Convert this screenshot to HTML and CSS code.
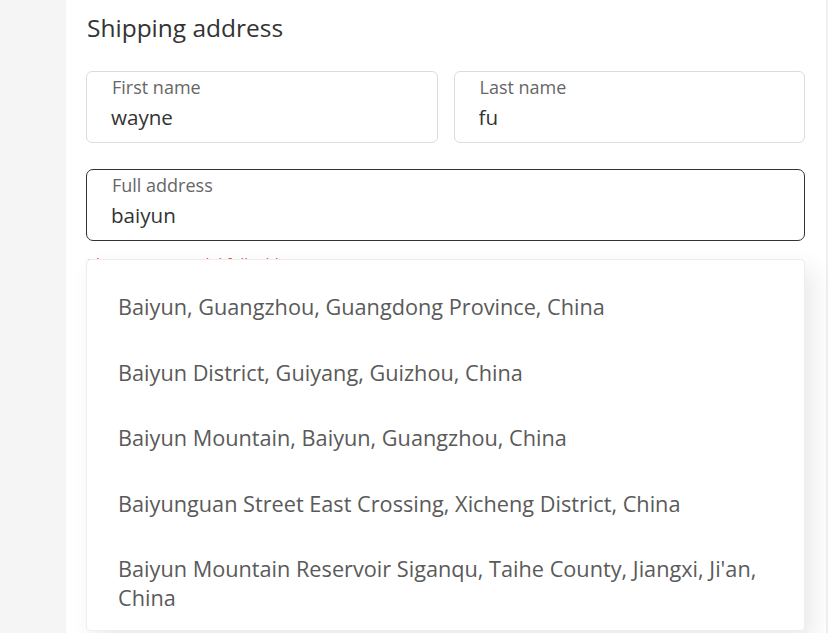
FILE: index.html
```html
<!DOCTYPE html>
<html lang="en">
<head>
    <meta charset="UTF-8">
    <meta name="viewport" content="width=device-width, initial-scale=1.0">
    <title>Shipping address</title>
    <link rel="stylesheet" href="styles.css">
</head>
<body>
    <div class="page">
        <div class="side"></div>
        <div class="panel">
            <h2 class="title">Shipping address</h2>

            <div class="row">
                <div class="field">
                    <label for="firstName">First name</label>
                    <input type="text" id="firstName" value="wayne">
                </div>
                <div class="field">
                    <label for="lastName">Last name</label>
                    <input type="text" id="lastName" value="fu">
                </div>
            </div>

            <div class="address">
                <div class="field focused">
                    <label for="fullAddress">Full address</label>
                    <input type="text" id="fullAddress" value="baiyun">
                </div>
                <div class="error">Please enter a valid full address</div>

                <ul class="suggestions">
                    <li>Baiyun, Guangzhou, Guangdong Province, China</li>
                    <li>Baiyun District, Guiyang, Guizhou, China</li>
                    <li>Baiyun Mountain, Baiyun, Guangzhou, China</li>
                    <li>Baiyunguan Street East Crossing, Xicheng District, China</li>
                    <li>Baiyun Mountain Reservoir Siganqu, Taihe County, Jiangxi, Ji'an, China</li>
                </ul>
            </div>
        </div>
        <div class="edge"></div>
    </div>
</body>
</html>
```

FILE: styles.css
```css
/* Basic styling */
body {
    margin: 0;
    background-color: #f5f5f5;
    font-family: "Open Sans", "Noto Sans", Arial, sans-serif;
    color: #333;
    overflow: hidden;
}

.page {
    display: flex;
    height: 633px;
}

.side {
    width: 66px;
    flex-shrink: 0;
}

.panel {
    flex: 1;
    background: white;
    padding: 10px 21px 0 20px;
}

.edge {
    width: 2px;
    background: #f0f0f0;
}

.title {
    margin: 0 0 25px 1px;
    font-size: 24.5px;
    font-weight: 400;
    line-height: 36px;
    color: #333;
}

.row {
    display: flex;
    gap: 16px;
    margin-bottom: 26px;
}

.field {
    flex: 1;
    height: 72px;
    box-sizing: border-box;
    border: 1px solid #dcdcdc;
    border-radius: 6px;
    padding: 4px 24px 0 24px;
    display: flex;
    flex-direction: column;
}

.field.focused {
    border-color: #333;
    border-radius: 7px;
}

.field label {
    font-size: 18px;
    line-height: 22px;
    color: #666;
    padding-left: 1px;
}

.field input {
    border: none;
    outline: none;
    padding: 0;
    margin-top: 5px;
    font-family: inherit;
    font-size: 20.6px;
    line-height: 28px;
    color: #333;
    background: transparent;
}

.address {
    position: relative;
}

.error {
    margin-top: 12px;
    font-size: 15px;
    color: #ff3b3b;
    padding-left: 1px;
}

.suggestions {
    position: absolute;
    top: 90px;
    left: 0;
    right: 0;
    margin: 0;
    padding: 14px 0 0;
    height: 372px;
    box-sizing: border-box;
    list-style: none;
    background: white;
    border: 1px solid #eee;
    border-radius: 4px;
    box-shadow: 8px 10px 24px rgba(0, 0, 0, 0.09);
}

.suggestions li {
    padding: 18.25px 40px 18.25px 31px;
    font-size: 21.7px;
    line-height: 29px;
    color: #5a5a5a;
}
```
